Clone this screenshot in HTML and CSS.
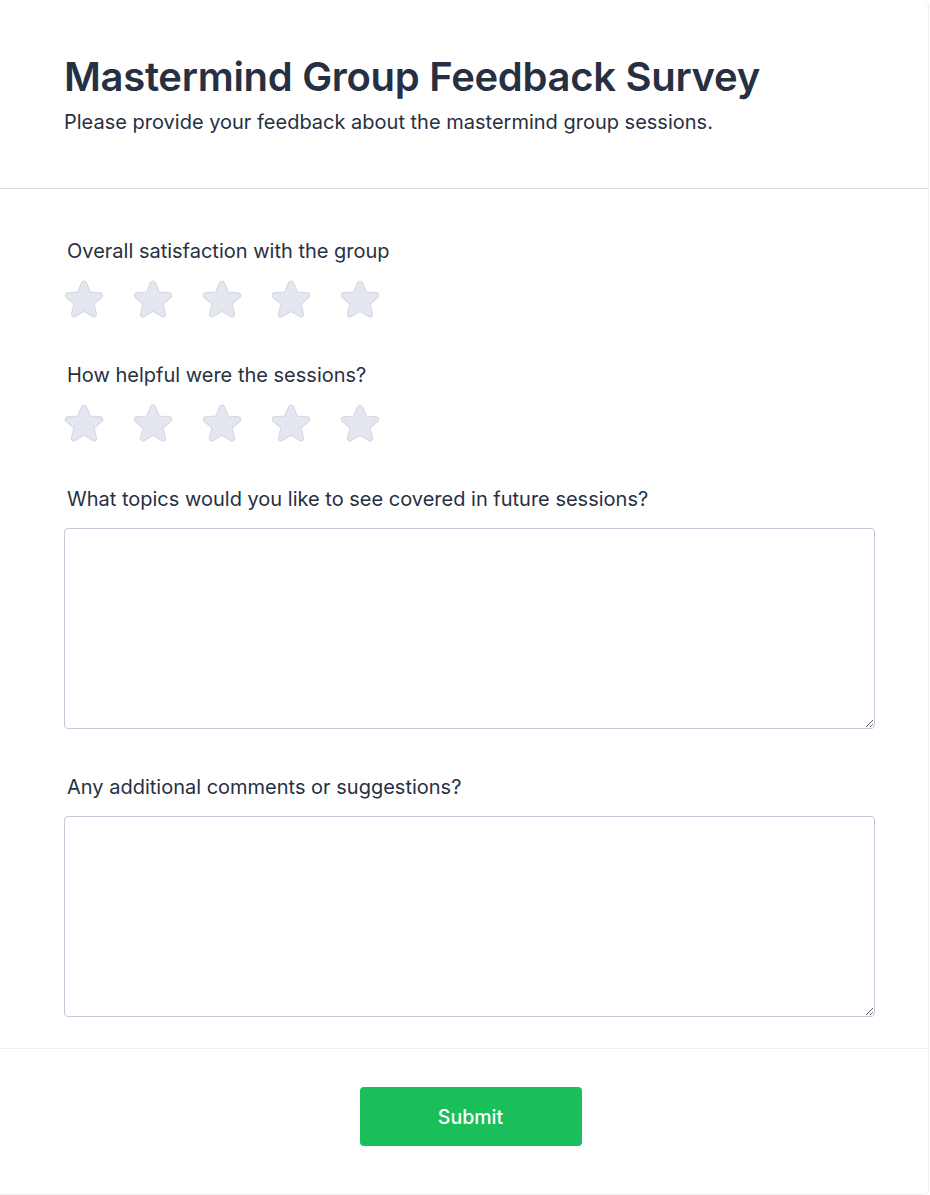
FILE: index.html
```html
<!DOCTYPE html>
<html lang="en">
<head>
<meta charset="utf-8">
<title>Mastermind Group Feedback Survey</title>
<link rel="stylesheet" href="styles.css">
</head>
<body>
<div class="card">
  <header class="head">
    <h1 class="title">Mastermind Group Feedback Survey</h1>
    <p class="subtitle">Please provide your feedback about the mastermind group sessions.</p>
  </header>
  <form class="body">
    <div class="group group-stars">
      <label class="label">Overall satisfaction with the group</label>
      <div class="stars">
        <svg class="star" viewBox="2 2.4 20 19"><path d="M10.788 3.21c.448-1.077 1.976-1.077 2.424 0l2.082 5.007 5.404.433c1.164.093 1.636 1.545.749 2.305l-4.117 3.527 1.257 5.273c.271 1.136-.964 2.033-1.96 1.425L12 18.354 7.373 21.18c-.996.608-2.231-.29-1.96-1.425l1.257-5.273-4.117-3.527c-.887-.76-.415-2.212.749-2.305l5.404-.433 2.082-5.006z"/></svg>
        <svg class="star" viewBox="2 2.4 20 19"><path d="M10.788 3.21c.448-1.077 1.976-1.077 2.424 0l2.082 5.007 5.404.433c1.164.093 1.636 1.545.749 2.305l-4.117 3.527 1.257 5.273c.271 1.136-.964 2.033-1.96 1.425L12 18.354 7.373 21.18c-.996.608-2.231-.29-1.96-1.425l1.257-5.273-4.117-3.527c-.887-.76-.415-2.212.749-2.305l5.404-.433 2.082-5.006z"/></svg>
        <svg class="star" viewBox="2 2.4 20 19"><path d="M10.788 3.21c.448-1.077 1.976-1.077 2.424 0l2.082 5.007 5.404.433c1.164.093 1.636 1.545.749 2.305l-4.117 3.527 1.257 5.273c.271 1.136-.964 2.033-1.96 1.425L12 18.354 7.373 21.18c-.996.608-2.231-.29-1.96-1.425l1.257-5.273-4.117-3.527c-.887-.76-.415-2.212.749-2.305l5.404-.433 2.082-5.006z"/></svg>
        <svg class="star" viewBox="2 2.4 20 19"><path d="M10.788 3.21c.448-1.077 1.976-1.077 2.424 0l2.082 5.007 5.404.433c1.164.093 1.636 1.545.749 2.305l-4.117 3.527 1.257 5.273c.271 1.136-.964 2.033-1.96 1.425L12 18.354 7.373 21.18c-.996.608-2.231-.29-1.96-1.425l1.257-5.273-4.117-3.527c-.887-.76-.415-2.212.749-2.305l5.404-.433 2.082-5.006z"/></svg>
        <svg class="star" viewBox="2 2.4 20 19"><path d="M10.788 3.21c.448-1.077 1.976-1.077 2.424 0l2.082 5.007 5.404.433c1.164.093 1.636 1.545.749 2.305l-4.117 3.527 1.257 5.273c.271 1.136-.964 2.033-1.96 1.425L12 18.354 7.373 21.18c-.996.608-2.231-.29-1.96-1.425l1.257-5.273-4.117-3.527c-.887-.76-.415-2.212.749-2.305l5.404-.433 2.082-5.006z"/></svg>
      </div>
    </div>
    <div class="group group-stars">
      <label class="label">How helpful were the sessions?</label>
      <div class="stars">
        <svg class="star" viewBox="2 2.4 20 19"><path d="M10.788 3.21c.448-1.077 1.976-1.077 2.424 0l2.082 5.007 5.404.433c1.164.093 1.636 1.545.749 2.305l-4.117 3.527 1.257 5.273c.271 1.136-.964 2.033-1.96 1.425L12 18.354 7.373 21.18c-.996.608-2.231-.29-1.96-1.425l1.257-5.273-4.117-3.527c-.887-.76-.415-2.212.749-2.305l5.404-.433 2.082-5.006z"/></svg>
        <svg class="star" viewBox="2 2.4 20 19"><path d="M10.788 3.21c.448-1.077 1.976-1.077 2.424 0l2.082 5.007 5.404.433c1.164.093 1.636 1.545.749 2.305l-4.117 3.527 1.257 5.273c.271 1.136-.964 2.033-1.96 1.425L12 18.354 7.373 21.18c-.996.608-2.231-.29-1.96-1.425l1.257-5.273-4.117-3.527c-.887-.76-.415-2.212.749-2.305l5.404-.433 2.082-5.006z"/></svg>
        <svg class="star" viewBox="2 2.4 20 19"><path d="M10.788 3.21c.448-1.077 1.976-1.077 2.424 0l2.082 5.007 5.404.433c1.164.093 1.636 1.545.749 2.305l-4.117 3.527 1.257 5.273c.271 1.136-.964 2.033-1.96 1.425L12 18.354 7.373 21.18c-.996.608-2.231-.29-1.96-1.425l1.257-5.273-4.117-3.527c-.887-.76-.415-2.212.749-2.305l5.404-.433 2.082-5.006z"/></svg>
        <svg class="star" viewBox="2 2.4 20 19"><path d="M10.788 3.21c.448-1.077 1.976-1.077 2.424 0l2.082 5.007 5.404.433c1.164.093 1.636 1.545.749 2.305l-4.117 3.527 1.257 5.273c.271 1.136-.964 2.033-1.96 1.425L12 18.354 7.373 21.18c-.996.608-2.231-.29-1.96-1.425l1.257-5.273-4.117-3.527c-.887-.76-.415-2.212.749-2.305l5.404-.433 2.082-5.006z"/></svg>
        <svg class="star" viewBox="2 2.4 20 19"><path d="M10.788 3.21c.448-1.077 1.976-1.077 2.424 0l2.082 5.007 5.404.433c1.164.093 1.636 1.545.749 2.305l-4.117 3.527 1.257 5.273c.271 1.136-.964 2.033-1.96 1.425L12 18.354 7.373 21.18c-.996.608-2.231-.29-1.96-1.425l1.257-5.273-4.117-3.527c-.887-.76-.415-2.212.749-2.305l5.404-.433 2.082-5.006z"/></svg>
      </div>
    </div>
    <div class="group group-text">
      <label class="label">What topics would you like to see covered in future sessions?</label>
      <textarea class="area"></textarea>
    </div>
    <div class="group group-text last">
      <label class="label">Any additional comments or suggestions?</label>
      <textarea class="area"></textarea>
    </div>
  </form>
  <footer class="foot">
    <button type="button" class="submit">Submit</button>
  </footer>
</div>
</body>
</html>
```
FILE: styles.css
```css
* { box-sizing: border-box; }
html, body { margin: 0; padding: 0; background: #ffffff; }
body {
  font-family: Inter, "Noto Sans", "Liberation Sans", sans-serif;
  color: #283040;
}
.card {
  width: 929px;
  min-height: 1194px;
  background: #ffffff;
  border-right: 1px solid #eeeff3;
  border-bottom: 1px solid #eeeff3;
  border-top-right-radius: 6px;
  border-bottom-right-radius: 6px;
}
.head {
  padding: 53px 54px 52px 64px;
  border-bottom: 1px solid #dcdce8;
}
.title {
  margin: 0 0 7px;
  font-size: 40px;
  line-height: 48px;
  font-weight: 600;
  letter-spacing: -0.3px;
  color: #272f42;
}
.subtitle {
  margin: 0;
  font-size: 20px;
  line-height: 28px;
  font-weight: 400;
  color: #283042;
}
.body {
  padding: 49px 54px 31px 64px;
  display: flex;
  flex-direction: column;
}
.group { display: flex; flex-direction: column; }
.group-stars { margin-bottom: 42px; }
.group-text { margin-bottom: 45px; }
.group-text.last { margin-bottom: 0; }
.label {
  padding-left: 3px;
  font-size: 20px;
  line-height: 26px;
  font-weight: 400;
  color: #283042;
  margin-bottom: 16px;
}
.stars {
  display: flex;
  align-items: flex-start;
  gap: 31px;
  height: 40px;
  padding-top: 1px;
  margin-left: 0.5px;
}
.star {
  width: 38px;
  height: 36px;
  display: block;
  overflow: visible;
}
.star path {
  fill: #e5e7f0;
  stroke: #d5d8e4;
  stroke-width: 0.6;
  stroke-linejoin: round;
}
.area {
  display: block;
  width: 811px;
  height: 201px;
  border: 1px solid #c5c7d8;
  border-radius: 4px;
  resize: vertical;
  font-family: inherit;
  font-size: 16px;
  padding: 8px 10px;
  background: #fff;
}
.foot {
  border-top: 1px solid #eeeef2;
  padding: 38px 54px 48px 67px;
  display: flex;
  justify-content: center;
}
.submit {
  width: 222px;
  height: 59px;
  border: none;
  border-radius: 4px;
  background: #1abf5c;
  color: #ffffff;
  font-family: Inter, "Noto Sans", "Liberation Sans", sans-serif;
  font-size: 19.5px;
  font-weight: 500;
  cursor: pointer;
}
```
